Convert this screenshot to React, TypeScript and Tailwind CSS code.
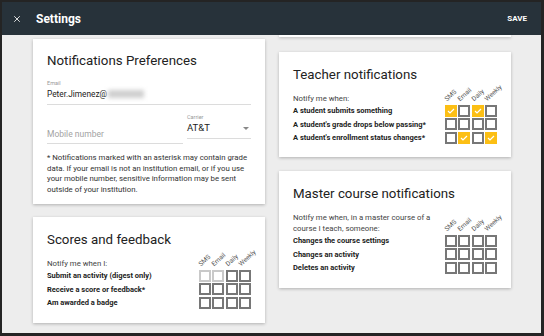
import React from "react";
import { X } from "lucide-react";

type Row = { label: string; values: ("on" | "off" | "dis")[] };

const headers = ["SMS", "Email", "Daily", "Weekly"];

const Box = ({ state }: { state: "on" | "off" | "dis" }) => {
  if (state === "on") {
    return (
      <div className="w-[12px] h-[12px] bg-[#fcbf14] flex items-center justify-center">
        <svg width="8" height="6" viewBox="0 0 8 6">
          <path d="M1 3 L3 5 L7 1" stroke="white" strokeWidth="1.2" fill="none" />
        </svg>
      </div>
    );
  }
  return (
    <div
      className={
        state === "dis"
          ? "w-[12px] h-[12px] border-2 border-[#c9c9c9]"
          : "w-[12px] h-[12px] border-2 border-[#777777]"
      }
    />
  );
};

const Matrix = ({ intro, rows }: { intro: React.ReactNode; rows: Row[] }) => (
  <div className="text-[7.5px] text-[#222]">
    <div className="flex items-end">
      <div className="flex-1 text-[#444] text-[7.8px] leading-[11px]">{intro}</div>
      <div className="flex gap-[1.5px] w-[52px]">
        {headers.map((h) => (
          <div key={h} className="relative w-[12px] h-[4px]">
            <span className="absolute left-[3px] bottom-[2px] origin-bottom-left -rotate-[42deg] whitespace-nowrap text-[6.5px] text-[#555] leading-none">
              {h}
            </span>
          </div>
        ))}
      </div>
    </div>
    {rows.map((r) => (
      <div key={r.label} className="flex items-center h-[13.5px]">
        <div className="flex-1 font-bold">{r.label}</div>
        <div className="flex gap-[1.5px] w-[52px]">
          {r.values.map((v, i) => (
            <Box key={i} state={v} />
          ))}
        </div>
      </div>
    ))}
  </div>
);

const Card = ({ className, children }: { className: string; children: React.ReactNode }) => (
  <div className={"bg-white shadow-[0_1px_3px_rgba(0,0,0,0.25)] px-[14px] " + className}>{children}</div>
);

export default function App() {
  return (
    <div
      className="w-[544px] h-[336px] bg-[#242424] pl-[2px] pt-[2px] pr-[3px] pb-[3px]"
      style={{ fontFamily: "Roboto, 'Liberation Sans', sans-serif" }}
    >
      <div className="w-full h-full flex flex-col bg-[#ededed] overflow-hidden">
        <div className="h-[33px] bg-[#27323a] flex items-center px-[10px] shrink-0">
          <X className="w-[10px] h-[10px] text-white" strokeWidth={2} />
          <span className="ml-[14px] text-white font-bold text-[12px]">Settings</span>
          <span className="ml-auto mr-[4px] text-white font-bold text-[8px]">SAVE</span>
        </div>
        <div className="flex gap-[14px] pl-[31px]">
          {/* left column */}
          <div className="w-[232px] flex flex-col gap-[13px] pt-[4px]">
            <Card className="h-[165px] pt-[12px]">
              <h2 className="text-[13.3px] leading-[20px] text-[#222]">Notifications Preferences</h2>
              <div className="mt-[8px] border-b border-[#dcdcdc] pb-[3px]">
                <div className="text-[5.5px] text-[#9a9a9a] leading-[8px]">Email</div>
                <div className="text-[8.3px] text-[#222] leading-[14px] flex items-center">
                  Peter.Jimenez@
                  <span className="inline-block w-[36px] h-[8px] bg-[#cfcfcf] blur-[2px] ml-[1px]" />
                </div>
              </div>
              <div className="flex gap-[4px] mt-[8px]">
                <div className="flex-1 border-b border-[#dcdcdc] pt-[15px] pb-[3px] text-[8.5px] text-[#a3a3a3] leading-[12px]">
                  Mobile number
                </div>
                <div className="w-[64px] border-b border-[#dcdcdc] self-start pb-[3px]">
                  <div className="text-[5.5px] text-[#9a9a9a] leading-[8px]">Carrier</div>
                  <div className="flex items-center justify-between text-[9.5px] text-[#222] leading-[14px]">
                    AT&amp;T
                    <span className="w-0 h-0 border-l-[3px] border-r-[3px] border-t-[3px] border-l-transparent border-r-transparent border-t-[#888] mr-[2px]" />
                  </div>
                </div>
              </div>
              <p className="mt-[9px] text-[7.8px] leading-[10.5px] text-[#333]">
                * Notifications marked with an asterisk may contain grade data. If your email is not an institution email,
                or if you use your mobile number, sensitive information may be sent outside of your institution.
              </p>
            </Card>
            <Card className="h-[106px] pt-[13px]">
              <h2 className="text-[13.3px] leading-[20px] text-[#222] mb-[8px]">Scores and feedback</h2>
              <Matrix
                intro="Notify me when I:"
                rows={[
                  { label: "Submit an activity (digest only)", values: ["dis", "dis", "off", "off"] },
                  { label: "Receive a score or feedback*", values: ["off", "off", "off", "off"] },
                  { label: "Am awarded a badge", values: ["off", "off", "off", "off"] },
                ]}
              />
            </Card>
          </div>
          {/* right column */}
          <div className="w-[232px] flex flex-col">
            <div className="h-[2px] bg-white shadow-[0_1px_3px_rgba(0,0,0,0.25)]" />
            <Card className="mt-[15px] h-[105px] pt-[13px]">
              <h2 className="text-[13.3px] leading-[20px] text-[#222] mb-[8px]">Teacher notifications</h2>
              <Matrix
                intro="Notify me when:"
                rows={[
                  { label: "A student submits something", values: ["on", "off", "on", "off"] },
                  { label: "A student's grade drops below passing*", values: ["off", "off", "off", "off"] },
                  { label: "A student's enrollment status changes*", values: ["off", "on", "off", "on"] },
                ]}
              />
            </Card>
            <Card className="mt-[14px] h-[117px] pt-[13px]">
              <h2 className="text-[13.3px] leading-[20px] text-[#222] mb-[8px]">Master course notifications</h2>
              <Matrix
                intro={
                  <>
                    Notify me when, in a master course of a<br />
                    course I teach, someone:
                  </>
                }
                rows={[
                  { label: "Changes the course settings", values: ["off", "off", "off", "off"] },
                  { label: "Changes an activity", values: ["off", "off", "off", "off"] },
                  { label: "Deletes an activity", values: ["off", "off", "off", "off"] },
                ]}
              />
            </Card>
          </div>
        </div>
      </div>
    </div>
  );
}
